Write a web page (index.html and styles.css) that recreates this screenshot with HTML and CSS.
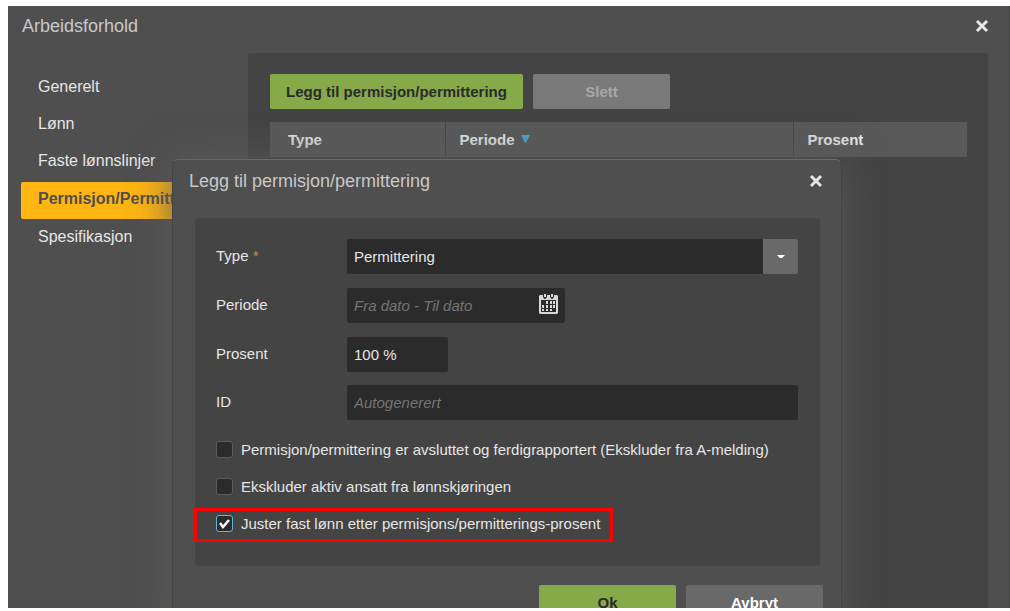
FILE: index.html
```
<!DOCTYPE html>
<html lang="no">
<head>
  <meta charset="UTF-8">
  <title>Arbeidsforhold</title>
  <link rel="stylesheet" href="styles.css">
</head>
<body>

  <main class="window">
    <header class="window-header">
      <h1>Arbeidsforhold</h1>
      <button type="button" class="close" aria-label="Lukk">
        <svg width="14" height="14" viewBox="0 0 14 14"><path d="M2 2l10 10M12 2L2 12"/></svg>
      </button>
    </header>

    <div class="window-body">
      <nav class="menu">
        <a href="#">Generelt</a>
        <a href="#">Lønn</a>
        <a href="#">Faste lønnslinjer</a>
        <a href="#" class="active">Permisjon/Permittering</a>
        <a href="#">Spesifikasjon</a>
      </nav>

      <section class="content">
        <div class="toolbar">
          <button type="button" class="btn btn-green btn-wide">Legg til permisjon/permittering</button>
          <button type="button" class="btn btn-disabled" disabled>Slett</button>
        </div>
        <table class="grid">
          <thead>
            <tr>
              <th class="col-type">Type</th>
              <th>Periode <svg class="sort" width="9" height="8" viewBox="0 0 9 8"><path d="M0 0h9L5 8H4z"/></svg></th>
              <th class="col-percent">Prosent</th>
            </tr>
          </thead>
        </table>
      </section>
    </div>

    <!-- Dialog -->
    <div class="dialog" role="dialog" aria-labelledby="dialogTitle">
      <header class="dialog-header">
        <h2 id="dialogTitle">Legg til permisjon/permittering</h2>
        <button type="button" class="close" aria-label="Lukk">
          <svg width="14" height="14" viewBox="0 0 14 14"><path d="M2 2l10 10M12 2L2 12"/></svg>
        </button>
      </header>

      <form id="leaveForm">
        <div class="panel">
          <div class="row">
            <label for="type">Type <span class="required">*</span></label>
            <div class="field select-field">
              <select id="type">
                <option>Permittering</option>
                <option>Permisjon</option>
              </select>
              <span class="arrow"><svg width="8" height="4" viewBox="0 0 8 4"><path d="M0 0h8L5 3H3z"/></svg></span>
            </div>
          </div>
          <div class="row">
            <label for="period">Periode</label>
            <div class="field date-field">
              <input type="text" id="period" placeholder="Fra dato - Til dato">
              <svg class="calendar" width="19" height="20" viewBox="0 0 19 20">
                <path fill="#d8d8d8" fill-rule="evenodd" d="M1 1h3v2q1 2 2 2t2-2V1h3v2q1 2 2 2t2-2V1h3l1 1v17l-1 1H1l-1-1V2zM2 6v12h15V6z"/>
                <path fill="#d8d8d8" d="M5 0h2v3H5zM12 0h2v3h-2z"/>
                <path fill="#d8d8d8" d="M7 7h2v3H7zM11 7h2v3h-2zM14 7h2v3h-2zM3 11h2v3H3zM7 11h2v3H7zM11 11h2v3h-2zM14 11h2v3h-2zM3 15h2v2H3zM7 15h2v2H7zM11 15h2v2h-2z"/>
              </svg>
            </div>
          </div>
          <div class="row">
            <label for="percent">Prosent</label>
            <div class="field percent-field">
              <input type="text" id="percent" value="100 %">
            </div>
          </div>
          <div class="row">
            <label for="id">ID</label>
            <div class="field">
              <input type="text" id="id" placeholder="Autogenerert">
            </div>
          </div>

          <div class="checks">
            <label class="check"><input type="checkbox"><span>Permisjon/permittering er avsluttet og ferdigrapportert (Ekskluder fra A-melding)</span></label>
            <label class="check"><input type="checkbox"><span>Ekskluder aktiv ansatt fra lønnskjøringen</span></label>
            <label class="check marked"><input type="checkbox" checked><span>Juster fast lønn etter permisjons/permitterings-prosent</span></label>
          </div>
        </div>

        <div class="actions">
          <button type="submit" class="btn btn-green">Ok</button>
          <button type="button" class="btn btn-grey">Avbryt</button>
        </div>
      </form>
    </div>
  </main>

</body>
</html>
```
FILE: styles.css
```
* {
  box-sizing: border-box;
}

body {
  margin: 0;
  height: 100vh;
  padding: 6px 0 3px 8px;
  background: #fff;
  font-family: Arial, "Liberation Sans", sans-serif;
  font-size: 15px;
  color: #e6e6e6;
  overflow: hidden;
}

.window {
  position: relative;
  height: 100%;
  display: flex;
  flex-direction: column;
  background: #4f4f4f;
  border-right: 1px solid #444;
  overflow: hidden;
}

.window-header,
.dialog-header {
  display: flex;
  justify-content: space-between;
  align-items: center;
}

.window-header {
  height: 47px;
  padding: 0 20px 8px 14px;
}

h1,
h2 {
  margin: 0;
  font-size: 18px;
  line-height: 20px;
  font-weight: normal;
  color: #c8c8c8;
}

.close {
  display: flex;
  padding: 0;
  border: none;
  background: none;
  cursor: pointer;
}

.close path {
  fill: none;
  stroke: #e6e6e6;
  stroke-width: 3;
}

.window-body {
  flex: 1;
  display: flex;
}

.menu {
  width: 240px;
  padding: 16px 0 0 13px;
}

.menu a {
  display: block;
  height: 37px;
  padding-left: 17px;
  line-height: 35px;
  font-size: 16px;
  color: #e6e6e6;
  text-decoration: none;
}

.menu a.active {
  margin-top: 2px;
  background: #ffb612;
  border-radius: 2px;
  font-weight: bold;
  line-height: 33px;
  color: #4f4f4f;
}

.content {
  flex: 1;
  margin-right: 21px;
  padding: 21px;
  padding-left: 22px;
  background: #444;
  border-radius: 3px 3px 0 0;
}

.toolbar,
.actions {
  display: flex;
  gap: 10px;
}

.btn {
  width: 137px;
  height: 35px;
  padding: 0;
  border: none;
  border-radius: 2px;
  font-family: inherit;
  font-size: 15px;
  font-weight: bold;
  cursor: pointer;
}

.btn-wide {
  width: 253px;
}

.btn-green {
  background: #86a94a;
  color: #2b2b2b;
}

.btn-grey {
  background: #696969;
  color: #fff;
}

.btn-disabled {
  background: #797979;
  color: #a8a8a8;
}

.grid {
  width: 100%;
  margin-top: 13px;
  border-collapse: collapse;
  table-layout: fixed;
}

.grid th {
  height: 35px;
  padding: 0 14px;
  background: #595959;
  border-left: 1px solid #444;
  text-align: left;
}

.grid .col-type {
  width: 175px;
  padding-left: 18px;
  border-left: none;
}

.grid .col-percent {
  width: 174px;
}

.sort {
  margin-left: 2px;
  vertical-align: 2px;
  fill: #4ba7cc;
}

/* dialog */
.dialog {
  position: absolute;
  top: 153px;
  left: 164px;
  right: 167px;
  background: #4f4f4f;
  border: 1px solid #444;
  border-top-color: #6a6a6a;
  border-radius: 6px;
  box-shadow: 0 0 40px rgba(90, 90, 90, 0.9);
}

.dialog-header {
  height: 58px;
  padding: 0 18px 16px 16px;
}

.panel {
  margin: 0 21px 0 22px;
  padding: 21px 22px 24px 21px;
  background: #444;
  border-radius: 3px;
}

.row {
  display: flex;
  margin-bottom: 14px;
}

.row:nth-child(3) {
  margin-bottom: 13px;
}

.row label {
  width: 131px;
  line-height: 33px;
}

.required {
  color: #e08214;
}

.field {
  position: relative;
  flex: 1;
}

.date-field {
  flex: 0 0 218px;
}

.percent-field {
  flex: 0 0 101px;
}

.field input,
.field select {
  display: block;
  width: 100%;
  height: 35px;
  padding: 0 7px;
  border: none;
  border-radius: 2px;
  background: #2b2b2b;
  font-family: inherit;
  font-size: 15px;
  color: #e6e6e6;
  appearance: none;
}

.field input::placeholder {
  color: #757575;
  font-style: italic;
  opacity: 1;
}

.arrow {
  position: absolute;
  top: 0;
  right: 0;
  width: 35px;
  height: 35px;
  display: flex;
  align-items: center;
  justify-content: center;
  background: #696969;
  border-radius: 0 2px 2px 0;
  fill: #fff;
  pointer-events: none;
}

.calendar {
  position: absolute;
  top: 6px;
  right: 7px;
}

.checks {
  display: flex;
  flex-direction: column;
  align-items: flex-start;
  gap: 3px;
}

.check {
  display: flex;
  align-items: center;
  gap: 8px;
  height: 34px;
  margin-left: -22px;
  padding: 0 10px 3px 19px;
  border: 3px solid transparent;
}

.check.marked {
  border-color: #f00;
}

.check input {
  appearance: none;
  width: 17px;
  height: 17px;
  margin: 0;
  border: 1px solid #5c5c5c;
  border-radius: 3px;
  background: #2b2b2b;
}

.check input:checked {
  border-color: #5fb6d6;
  background: #2b2b2b url("data:image/svg+xml,%3Csvg xmlns='http://www.w3.org/2000/svg' viewBox='0 0 15 15'%3E%3Cpath d='M3 7l3 4 6-7' fill='none' stroke='%23fff' stroke-width='2.5'/%3E%3C/svg%3E");
}

.actions {
  justify-content: flex-end;
  padding: 19px 18px 18px;
}
```
